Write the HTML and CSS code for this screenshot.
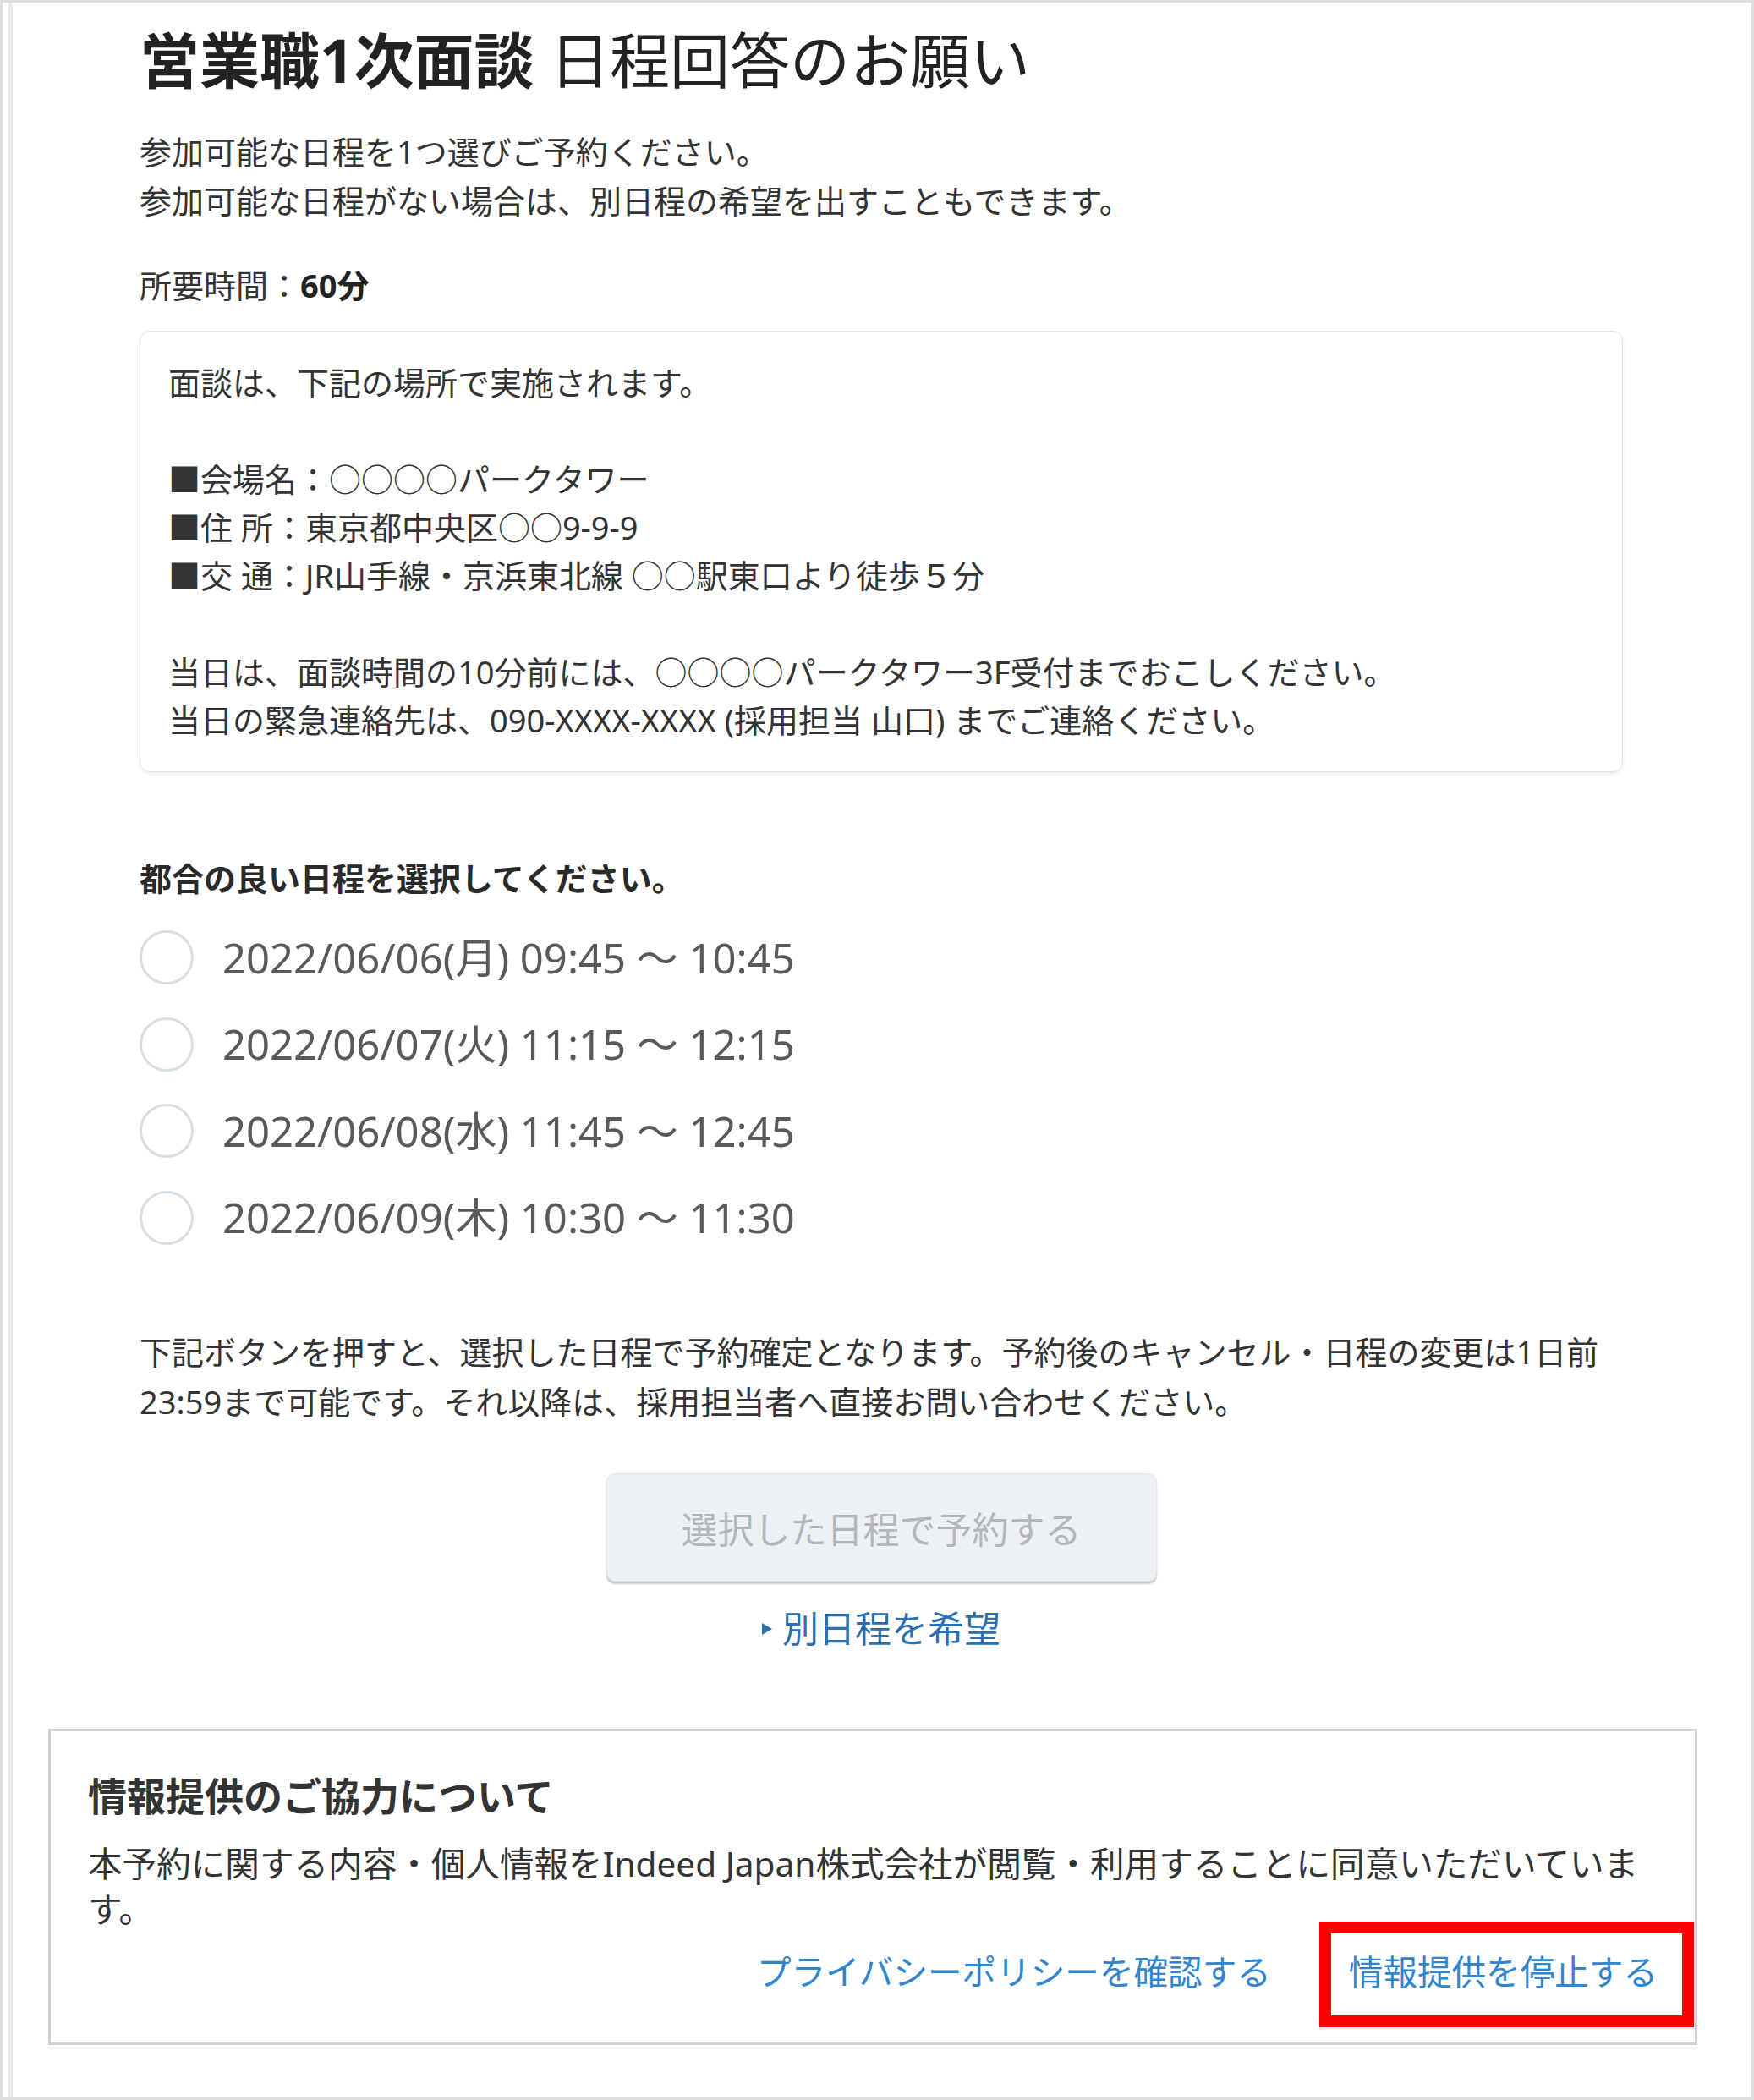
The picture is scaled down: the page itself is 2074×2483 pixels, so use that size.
FILE: index.html
```html
<!DOCTYPE html>
<html lang="ja">
<head>
<meta charset="utf-8">
<title>営業職1次面談 日程回答のお願い</title>
<link rel="stylesheet" href="styles.css">
</head>
<body>
<div class="frame">
  <main class="main">
    <h1 class="title"><strong>営業職1次面談</strong> 日程回答のお願い</h1>
    <p class="lead">参加可能な日程を1つ選びご予約ください。<br>参加可能な日程がない場合は、別日程の希望を出すこともできます。</p>
    <p class="duration">所要時間：<strong>60分</strong></p>
    <div class="venue">
      <p>面談は、下記の場所で実施されます。</p>
      <p>■会場名：○○○○パークタワー<br>■住 所：東京都中央区○○9-9-9<br>■交 通：JR山手線・京浜東北線 ○○駅東口より徒歩５分</p>
      <p>当日は、面談時間の10分前には、○○○○パークタワー3F受付までおこしください。<br>当日の緊急連絡先は、090-XXXX-XXXX (採用担当 山口) までご連絡ください。</p>
    </div>
    <h2 class="choose">都合の良い日程を選択してください。</h2>
    <ul class="slots">
      <li class="slot"><span class="radio"></span><span class="slot-label">2022/06/06(月) 09:45 ～ 10:45</span></li>
      <li class="slot"><span class="radio"></span><span class="slot-label">2022/06/07(火) 11:15 ～ 12:15</span></li>
      <li class="slot"><span class="radio"></span><span class="slot-label">2022/06/08(水) 11:45 ～ 12:45</span></li>
      <li class="slot"><span class="radio"></span><span class="slot-label">2022/06/09(木) 10:30 ～ 11:30</span></li>
    </ul>
    <p class="notice">下記ボタンを押すと、選択した日程で予約確定となります。予約後のキャンセル・日程の変更は1日前<br>23:59まで可能です。それ以降は、採用担当者へ直接お問い合わせください。</p>
    <div class="actions">
      <button class="reserve" type="button" disabled>選択した日程で予約する</button>
      <a class="alt-link" href="#"><span class="tri"></span>別日程を希望</a>
    </div>
  </main>
  <section class="consent">
    <h3 class="consent-title">情報提供のご協力について</h3>
    <p class="consent-text">本予約に関する内容・個人情報をIndeed Japan株式会社が閲覧・利用することに同意いただいていま<br>す。</p>
    <div class="consent-links">
      <a href="#" class="consent-link">プライバシーポリシーを確認する</a>
      <a href="#" class="consent-link stop">情報提供を停止する</a>
    </div>
  </section>
</div>
</body>
</html>
```

FILE: styles.css
```css
html, body {
  margin: 0;
  padding: 0;
  background: #fff;
}

body {
  font-family: "Noto Sans", "Noto Sans CJK JP", sans-serif;
  color: #333;
}

.frame {
  box-sizing: border-box;
  min-height: 2483px;
  width: 2074px;
  border: 3px solid #dedede;
  box-shadow: inset 7px 0 0 #fff, inset 12px 0 0 #e9e9e9;
  padding-top: 26px;
  overflow: hidden;
}

.main {
  margin-left: 162px;
  width: 1754px;
}

.title {
  margin: 0;
  font-size: 71px;
  line-height: 84px;
  font-weight: 400;
  color: #222;
  white-space: nowrap;
}

.title strong {
  font-weight: 700;
}

.lead {
  margin: 37px 0 0;
  font-size: 38px;
  line-height: 58px;
}

.duration {
  margin: 42px 0 0;
  font-size: 38px;
  line-height: 58px;
}

.duration strong {
  font-weight: 700;
  color: #222;
}

.venue {
  margin-top: 25px;
  border: 1px solid #e2e2e2;
  border-radius: 12px;
  box-shadow: 0 2px 4px rgba(0, 0, 0, 0.08);
  padding: 32px 33px;
}

.venue p {
  margin: 0;
  font-size: 38px;
  line-height: 57px;
}

.venue p + p {
  margin-top: 57px;
}

.choose {
  margin: 96px 0 0;
  font-size: 38px;
  line-height: 58px;
  font-weight: 700;
  color: #2a2a2a;
}

.slots {
  list-style: none;
  margin: 14px 0 0;
  padding: 0;
}

.slot {
  display: flex;
  align-items: center;
  gap: 34px;
  height: 102.5px;
}

.radio {
  flex: none;
  box-sizing: border-box;
  width: 64px;
  height: 64px;
  border: 3px solid #d6dde3;
  border-radius: 50%;
}

.slot-label {
  font-size: 49px;
  line-height: 1;
  color: #595959;
}

.notice {
  margin: 78px 0 0;
  font-size: 38px;
  line-height: 59px;
}

.actions {
  display: flex;
  flex-direction: column;
  align-items: center;
  margin-top: 55px;
}

.reserve {
  box-sizing: border-box;
  width: 651px;
  height: 128px;
  background: #eef1f4;
  border: 1px solid #e1e5e9;
  border-radius: 10px;
  box-shadow: 0 3px 2px rgba(0, 0, 0, 0.22);
  font-family: "Noto Sans", "Noto Sans CJK JP", sans-serif;
  font-size: 43px;
  color: #b3b7bb;
  padding: 0;
}

.alt-link {
  display: flex;
  align-items: center;
  gap: 12px;
  margin-top: 26px;
  font-size: 43px;
  line-height: 60px;
  color: #2a6fae;
  text-decoration: none;
}

.tri {
  width: 0;
  height: 0;
  border-left: 12px solid #2a6fae;
  border-top: 7px solid transparent;
  border-bottom: 7px solid transparent;
}

.consent {
  box-sizing: border-box;
  width: 1950px;
  margin: 88px 0 0 54px;
  border: 3px solid #d2d2d2;
  padding: 46px 44px 56px;
}

.consent-title {
  margin: 0;
  font-size: 46px;
  line-height: 60px;
  font-weight: 700;
  color: #333;
}

.consent-text {
  margin: 24px 0 0;
  font-size: 40.6px;
  line-height: 54px;
}

.consent-links {
  display: flex;
  justify-content: flex-end;
  gap: 92px;
  margin-top: 20px;
  font-size: 40.6px;
  line-height: 54px;
}

.consent-link {
  color: #2f86cf;
  text-decoration: none;
}

.stop {
  position: relative;
}

.stop::after {
  content: "";
  position: absolute;
  left: -35px;
  right: -43px;
  top: -33px;
  bottom: -38px;
  border: 14px solid #ff0000;
}
```
